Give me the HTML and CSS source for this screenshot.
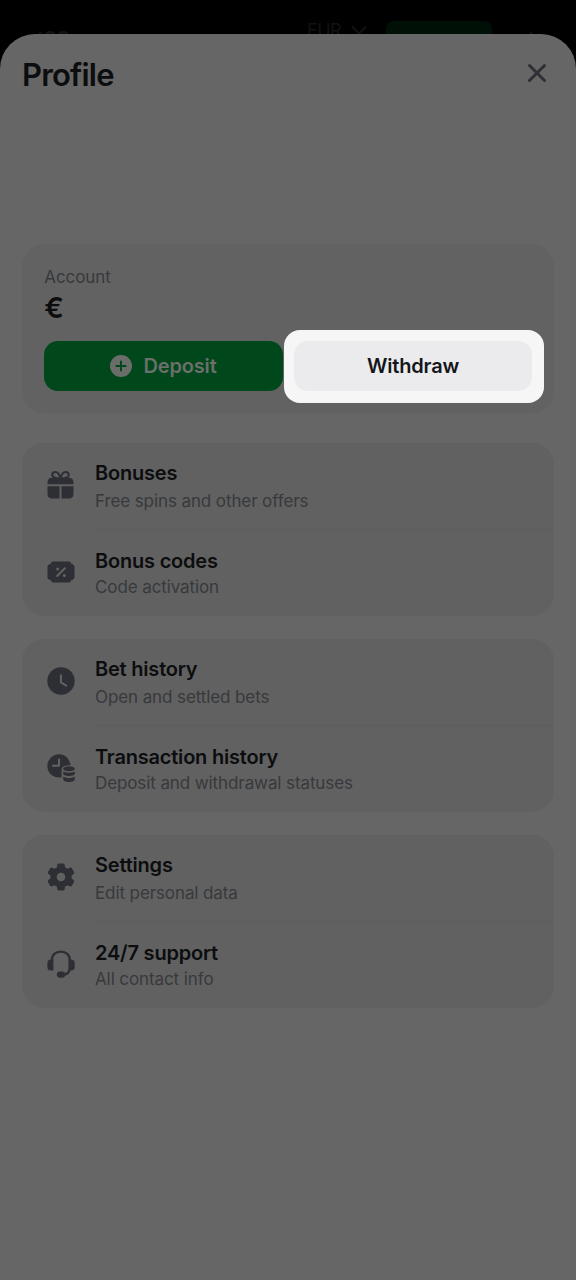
FILE: index.html
```html
<!DOCTYPE html>
<html lang="en">
<head>
<meta charset="utf-8">
<title>Profile</title>
<link rel="stylesheet" href="styles.css">
</head>
<body>
<div class="screen">
  <header class="topbar">
    <span class="brand">stOO</span>
    <span class="currency">EUR</span>
    <svg class="chevron" viewBox="0 0 18 10"><path d="M2 1.5l7 7 7-7"/></svg>
    <span class="topbar-button"></span>
    <svg class="plus" viewBox="0 0 12 12"><path d="M6 1v10M1 6h10"/></svg>
  </header>
  <main class="sheet">
    <div class="sheet-head">
      <h1 class="heading">Profile</h1>
      <svg class="close" viewBox="0 0 20 20"><path d="M2.500 2.500l15 15M17.500 2.500l-15 15"/></svg>
    </div>
    <section class="account">
      <div class="account-label">Account</div>
      <div class="balance">€</div>
      <div class="actions">
        <button class="button deposit">
          <svg class="deposit-icon" viewBox="0 0 22 22"><circle cx="11" cy="11" r="11"/><path d="M11 6.400v9.200M6.400 11h9.200"/></svg>
          <span>Deposit</span>
        </button>
        <div class="spotlight"><button class="button withdraw">Withdraw</button></div>
      </div>
    </section>
    <section class="group">
      <div class="row">
        <svg class="icon" viewBox="0 0 28 28">
          <path class="stroke" d="M13.500 7.500C11.500 7.500 5.200 7.200 5.200 4.100C5.200 2.300 6.500 1 8.300 1C11.200 1 12.800 4.300 13.500 7.500C14.200 4.300 15.800 1 18.700 1C20.500 1 21.800 2.300 21.800 4.100C21.800 7.200 15.500 7.500 13.500 7.500" stroke-width="2"/>
          <path d="M.5 13.200V11.500Q.5 6.800 5.200 6.800H21.800Q26.500 6.800 26.500 11.500V13.200ZM.5 15.200H12.500V27.400H5.200Q.5 27.400.5 22.700ZM14.500 15.200H26.500V22.700Q26.500 27.400 21.800 27.400H14.500Z"/>
        </svg>
        <div class="copy"><div class="title">Bonuses</div><div class="sub">Free spins and other offers</div></div>
      </div>
      <div class="row second">
        <svg class="icon" viewBox="0 0 28 28">
          <path d="M6 3.500H22Q24 3.500 24.300 5.900Q27.500 6.300 27.500 9V19Q27.500 21.700 24.300 22.100Q24 24.500 22 24.500H6Q4 24.500 3.700 22.100Q.5 21.700.5 19V9Q.5 6.300 3.700 5.900Q4 3.500 6 3.500Z"/>
          <path class="light-line" d="M10.200 18L17.800 10.300"/>
          <circle class="light" cx="10.700" cy="10.900" r="1.500"/><circle class="light" cx="17.300" cy="17.500" r="1.500"/>
        </svg>
        <div class="copy"><div class="title">Bonus codes</div><div class="sub">Code activation</div></div>
      </div>
    </section>
    <section class="group">
      <div class="row">
        <svg class="icon" viewBox="0 0 28 28"><circle cx="14" cy="14" r="13.700"/><path class="light-line" d="M13.900 8.300V15.400L19.200 18.700"/></svg>
        <div class="copy"><div class="title">Bet history</div><div class="sub">Open and settled bets</div></div>
      </div>
      <div class="row second">
        <svg class="icon" viewBox="0 0 28 28">
          <path d="M12 .3A11.600 11.600 0 1 0 14.600 23.200V14.800Q15.500 11.700 22 11.300H23.500A11.600 11.600 0 0 0 12 .3Z"/>
          <path class="light-line" d="M12 5.600V11.800H5.900"/>
          <ellipse cx="22" cy="14.800" rx="5.800" ry="2.500"/>
          <path d="M16.200 17.400Q22 20.300 27.800 17.400V19.300Q27.800 22 22 22T16.200 19.300ZM16.200 22.800Q22 25.700 27.800 22.800V25Q27.800 27.900 22 27.900T16.200 25Z"/>
        </svg>
        <div class="copy"><div class="title">Transaction history</div><div class="sub">Deposit and withdrawal statuses</div></div>
      </div>
    </section>
    <section class="group">
      <div class="row">
        <svg class="icon" viewBox="0 0 28 28">
          <path fill-rule="evenodd" d="M11.700.4H16.300Q17.500.4 17.700 1.800L18 4.300L20.500 5.700L22.900 4.700Q24.200 4.200 24.900 5.300L27 9Q27.600 10.100 26.600 11L24.600 12.600V15.400L26.600 17Q27.600 17.900 27 19L24.900 22.700Q24.200 23.800 22.900 23.300L20.500 22.300L18 23.700L17.700 26.200Q17.500 27.600 16.300 27.600H11.700Q10.500 27.600 10.300 26.200L10 23.700L7.500 22.300L5.100 23.300Q3.800 23.800 3.100 22.700L1 19Q.4 17.900 1.400 17L3.400 15.400V12.600L1.400 11Q.4 10.100 1 9L3.100 5.300Q3.800 4.200 5.100 4.700L7.500 5.700L10 4.300L10.300 1.800Q10.500.4 11.700.4ZM14 9.700A4.300 4.300 0 1 0 14 18.300A4.300 4.300 0 1 0 14 9.700Z"/>
        </svg>
        <div class="copy"><div class="title">Settings</div><div class="sub">Edit personal data</div></div>
      </div>
      <div class="row second">
        <svg class="icon" viewBox="0 0 28 28">
          <path class="stroke" d="M4.800 12V10.500C4.800 4.900 8.700 1.600 13.800 1.600S22.900 4.900 22.900 10.500V17.500C22.900 22.300 20.300 24.800 15 24.800" stroke-width="2.300"/>
          <path d="M6.400 9.500V20.500H4Q.4 20.500.4 17V13Q.4 9.500 4 9.500ZM21.600 9.500H24Q27.700 9.500 27.700 13V17Q27.700 20.500 24 20.500H21.600Z"/>
          <rect x="9.800" y="21.500" width="8.500" height="6.200" rx="3.100"/>
        </svg>
        <div class="copy"><div class="title">24/7 support</div><div class="sub">All contact info</div></div>
      </div>
    </section>
  </main>
</div>
</body>
</html>
```
FILE: styles.css
```css
* { box-sizing: border-box; }
body { margin: 0; background: #000; font-family: Inter, sans-serif; color: #0c0d0e; }
.screen { height: 1280px; overflow: hidden; display: flex; flex-direction: column; }
.topbar { height: 34px; flex: none; display: flex; align-items: flex-start; padding-left: 28px; color: #121212; }
.brand { width: 279px; padding-top: 28px; font-size: 18px; line-height: 20px; font-weight: 700; letter-spacing: -.8px; }
.currency { width: 43px; padding-top: 21px; font-size: 18px; line-height: 20px; letter-spacing: -.6px; }
.chevron { width: 18px; height: 10px; margin-top: 25px; fill: none; stroke: #121212; stroke-width: 2; }
.topbar-button { width: 106px; height: 34px; margin: 20.500px 0 0 18px; border-radius: 8px; background: #001006; }
.plus { width: 12px; height: 12px; margin: 31px 0 0 33px; stroke: #121212; stroke-width: 2; }
.sheet { position: relative; flex: 1; background: #666; border-radius: 35px 35px 0 0; padding: 0 22px; }
.sheet-head { height: 210.400px; padding: 20.500px 7px 0 0; display: flex; justify-content: space-between; align-items: flex-start; }
.heading { margin: 0; font-size: 31px; line-height: 40px; font-weight: 600; letter-spacing: -.8px; }
.close { width: 20px; height: 20px; margin-top: 8.500px; fill: none; stroke: #2e3035; stroke-width: 3; stroke-linecap: round; }
.account { height: 168.600px; border-radius: 22px; background: #626262; padding: 22.600px 22px 0 22.300px; margin-bottom: 30px; }
.account-label { font-size: 17px; line-height: 20px; letter-spacing: -.1px; color: #37393c; }
.balance { font-size: 29px; line-height: 36px; margin-top: 3px; font-weight: 600; }
.actions { display: grid; grid-template-columns: 238.500px 238.500px; gap: 11px; margin-top: 15.500px; }
.button { width: 100%; height: 50px; border: 0; border-radius: 14px; display: flex; align-items: center; justify-content: center; font: 600 20px/24px Inter, sans-serif; letter-spacing: -.15px; }
.deposit { background: #00471b; color: #6b706b; gap: 11px; }
.deposit-icon { width: 22px; height: 22px; fill: #6b6d6b; stroke-width: 2; stroke-linecap: round; }
.deposit-icon path { stroke: #00471b; }
.spotlight { margin: -11.500px -12px -11.500px -10px; padding: 11.500px 12px 11.500px 10px; background: #f6f6f6; border-radius: 16px; }
.withdraw { background: #ebebed; color: #151619; }
.group { height: 173px; border-radius: 22px; background: #616161; margin-bottom: 23px; padding-left: 25.400px; }
.row { display: flex; height: 87px; }
.icon { width: 28px; height: 28px; flex: none; margin: 28.400px 19.600px 0 0; fill: #2d2f34; }
.stroke { fill: none; stroke: #2d2f34; }
.light-line { fill: none; stroke: #626262; stroke-width: 2; stroke-linecap: round; stroke-linejoin: round; }
.light { fill: #626262; }
.copy { flex: 1; padding-top: 18px; border-bottom: 1px solid #5d5d5d; }
.title { font-size: 20px; line-height: 24px; font-weight: 600; letter-spacing: -.2px; }
.sub { font-size: 17px; line-height: 22px; margin-top: 5px; letter-spacing: -.1px; color: #37393c; }
.second .copy { padding-top: 19px; border-bottom: 0; }
.second .sub { margin-top: 3px; }
.second .icon { margin-top: 28px; }
```
